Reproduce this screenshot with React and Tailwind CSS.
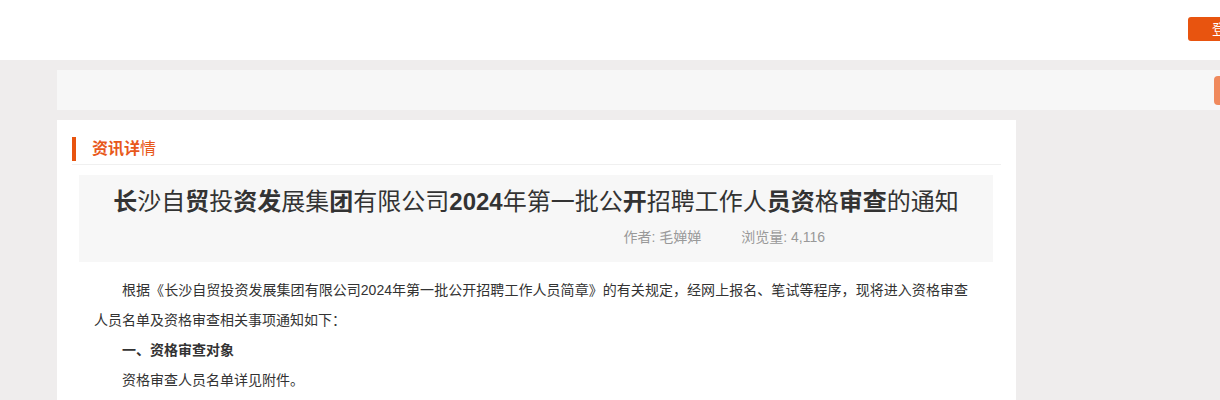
export default function App() {
  const font = { fontFamily: '"Liberation Sans", "Noto Sans CJK SC", sans-serif' };
  return (
    <div className="w-[1220px] overflow-hidden bg-[#efeded] min-h-[400px]" style={font}>
      {/* header */}
      <div className="h-[60px] bg-white flex items-start justify-end">
        <button className="mt-[17px] mr-[-44px] h-[24px] px-[24px] rounded-[3px] bg-[#e8540f] text-white text-[14px] leading-[24px] whitespace-nowrap">
          登录
        </button>
      </div>

      {/* nav bar */}
      <div className="pt-[10px] pl-[57px]">
        <div className="h-[40px] bg-[#f7f7f7] flex items-center justify-end">
          <div className="w-[20px] h-[29px] mr-[-14px] rounded-[4px] bg-[#f08a5d]" />
        </div>
      </div>

      {/* card */}
      <div className="mt-[10px] ml-[57px] w-[959px] bg-white pt-[17px] pb-[20px]">
        <div className="mx-[15px] pb-[3px] border-b border-[#f0f0f0]">
          <div className="h-[24px] border-l-4 border-[#e8540f] pl-[16px] text-[16px] leading-[24px] text-[#e8581a]">
            <span className="font-bold">资讯详</span>情
          </div>
        </div>

        <div className="mt-[10px] ml-[22px] mr-[23px] bg-[#f7f7f7] pt-[12px] pb-[15px]">
          <h1 className="text-center text-[24px] leading-[30px] text-[#333]">
            <b>长</b>沙自<b>贸</b>投<b>资发</b>展集<b>团</b>有限公司<b>2024</b>年第一批公<b>开</b>招聘工作人<b>员资</b>格<b>审查</b>的通知
          </h1>
          <div className="mt-[10px] flex justify-end pr-[168px] gap-[40px] text-[14px] leading-[20px] text-[#999]">
            <span>作者: 毛婵婵</span>
            <span>浏览量: 4,116</span>
          </div>
        </div>

        <div className="mt-[13px] ml-[37px] mr-[48px] text-[14px] leading-[30px] text-[#333]">
          <p className="indent-[28px] text-justify">
            根据《长沙自贸投资发展集团有限公司2024年第一批公开招聘工作人员简章》的有关规定，经网上报名、笔试等程序，现将进入资格审查人员名单及资格审查相关事项通知如下：
          </p>
          <p className="indent-[28px] font-bold">一、资格审查对象</p>
          <p className="indent-[28px]">资格审查人员名单详见附件。</p>
        </div>
      </div>
    </div>
  );
}
